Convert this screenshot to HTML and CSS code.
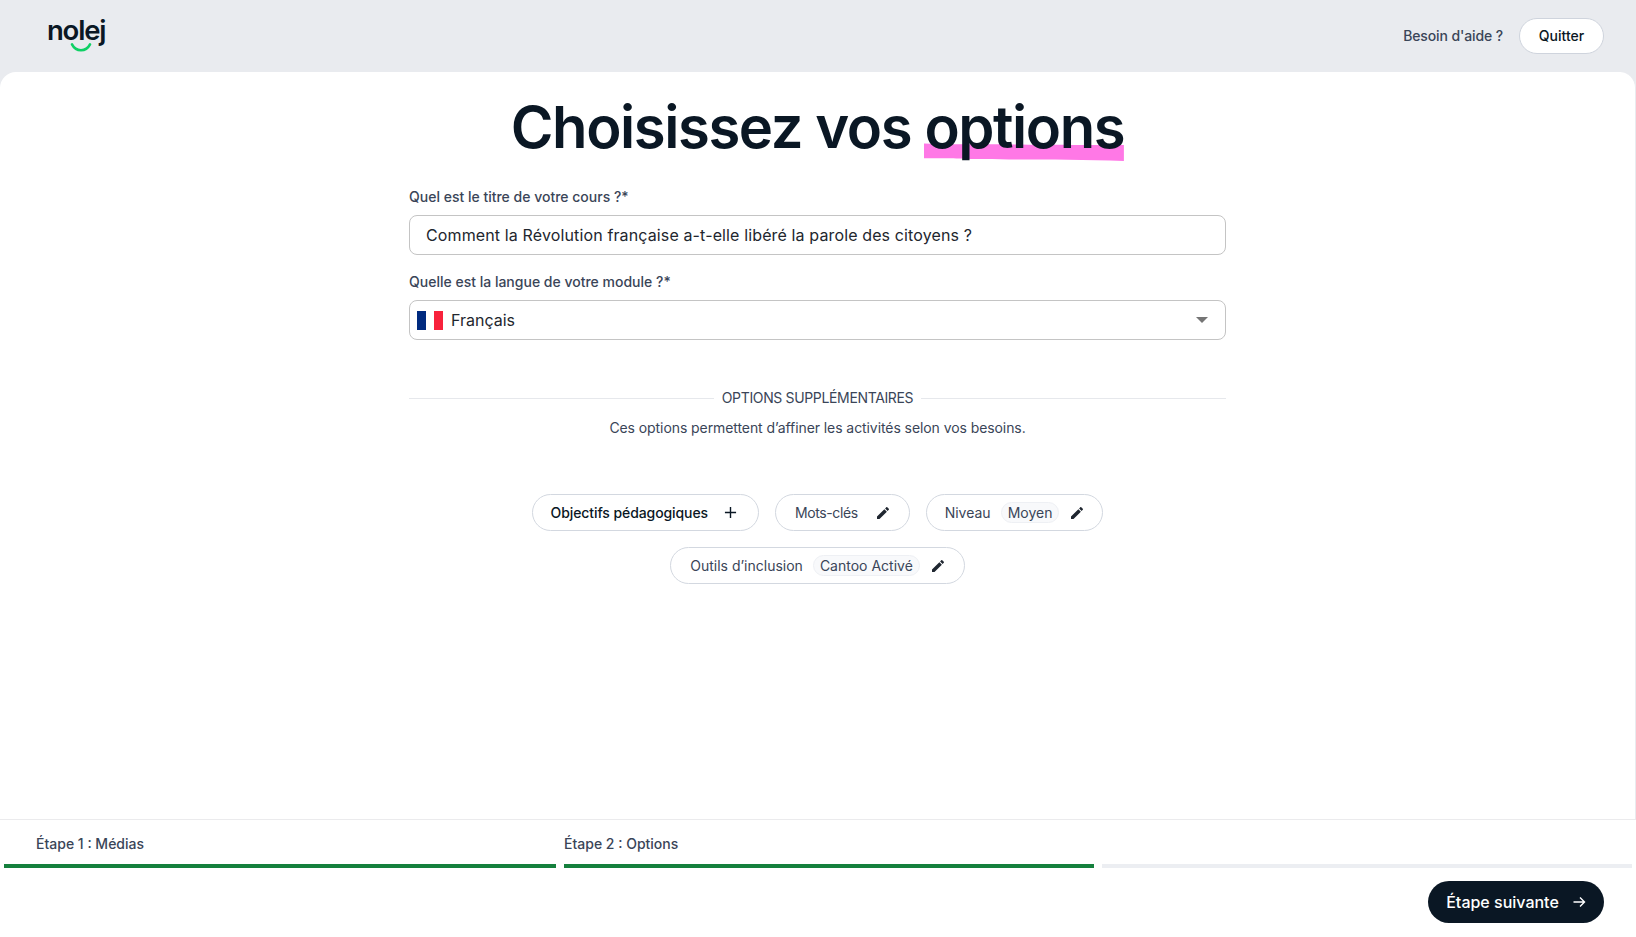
FILE: index.html
```html
<!DOCTYPE html>
<html lang="fr">
<head>
<meta charset="utf-8">
<title>Choisissez vos options</title>
<link rel="stylesheet" href="styles.css">
</head>
<body>
<header class="topbar">
  <a class="logo" href="#"><span class="logo-word">nolej</span>
    <svg class="logo-smile" viewBox="0 0 24 10" aria-hidden="true"><path d="M2 1.500c2.500 5 6 6.500 10 6.500s7.500-1.500 10-6.500" fill="none" stroke="#0fd065" stroke-width="2.800" stroke-linecap="round"/></svg>
  </a>
  <nav class="topnav">
    <a class="help" href="#">Besoin d'aide ?</a>
    <button class="quit" type="button">Quitter</button>
  </nav>
</header>
<main class="card">
  <h1 class="title">Choisissez vos <span class="mark">options<svg class="mark-bg" viewBox="0 0 200 19" preserveAspectRatio="none" aria-hidden="true"><path d="M0 0.500 C40 2 60 1 90 1.500 S170 2 200 2 L200 19 C150 17 100 18 60 17 S20 16 0 16 Z" fill="#ff78e6"/></svg></span></h1>
  <section class="form">
    <label class="field-label" for="course-title">Quel est le titre de votre cours ?*</label>
    <input class="field" id="course-title" type="text" value="Comment la Révolution française a-t-elle libéré la parole des citoyens ?">
    <div class="field-label second">Quelle est la langue de votre module ?*</div>
    <div class="field select" role="combobox" aria-expanded="false">
      <span class="flag"><i class="blue"></i><i class="white"></i><i class="red"></i></span>
      <span class="select-value">Français</span>
      <span class="caret"></span>
    </div>
    <div class="divider"><span>OPTIONS SUPPLÉMENTAIRES</span></div>
    <p class="hint">Ces options permettent d’affiner les activités selon vos besoins.</p>
    <div class="chips">
      <button class="chip strong" type="button"><span class="chip-label">Objectifs pédagogiques</span>
        <svg class="icon plus" viewBox="0 0 14 14" aria-hidden="true"><path d="M7 1v12M1 7h12" fill="none" stroke="currentColor" stroke-width="1.500"/></svg></button>
      <button class="chip keywords" type="button"><span class="chip-label">Mots-clés</span>
        <svg class="icon" viewBox="0 0 24 24" aria-hidden="true"><path d="M3 17.250V21h3.750L17.810 9.940l-3.750-3.750L3 17.250zM20.710 7.040c.39-.39.39-1.020 0-1.410l-2.340-2.340c-.39-.39-1.020-.39-1.410 0l-1.830 1.830 3.750 3.750 1.830-1.830z" fill="currentColor"/></svg></button>
      <button class="chip level" type="button"><span class="chip-label">Niveau</span><span class="pill">Moyen</span>
        <svg class="icon" viewBox="0 0 24 24" aria-hidden="true"><path d="M3 17.250V21h3.750L17.810 9.940l-3.750-3.750L3 17.250zM20.710 7.040c.39-.39.39-1.020 0-1.410l-2.340-2.340c-.39-.39-1.020-.39-1.410 0l-1.830 1.830 3.750 3.750 1.830-1.830z" fill="currentColor"/></svg></button>
      <button class="chip" type="button"><span class="chip-label">Outils d’inclusion</span><span class="pill">Cantoo Activé</span>
        <svg class="icon" viewBox="0 0 24 24" aria-hidden="true"><path d="M3 17.250V21h3.750L17.810 9.940l-3.750-3.750L3 17.250zM20.710 7.040c.39-.39.39-1.020 0-1.410l-2.340-2.340c-.39-.39-1.020-.39-1.410 0l-1.830 1.830 3.750 3.750 1.830-1.830z" fill="currentColor"/></svg></button>
    </div>
  </section>
</main>
<footer class="footer">
  <ol class="steps">
    <li class="step done step-1"><span class="step-name">Étape 1 : Médias</span></li>
    <li class="step done step-2"><span class="step-name">Étape 2 : Options</span></li>
    <li class="step step-3"><span class="step-name"></span></li>
  </ol>
  <div class="actions">
    <button class="next" type="button">Étape suivante
      <svg class="arrow" viewBox="0 0 14 14" aria-hidden="true"><path d="M1.500 7h11M8 2.500 12.500 7 8 11.500" fill="none" stroke="currentColor" stroke-width="1.400"/></svg></button>
  </div>
</footer>
</body>
</html>
```
FILE: styles.css
```css
* { box-sizing: border-box; }
html, body { height: 100%; }
body {
  margin: 0;
  height: 937px;
  overflow: hidden;
  display: flex;
  flex-direction: column;
  background: #e9ebef;
  font-family: "Inter", "Liberation Sans", sans-serif;
  color: #3a4558;
}
a { text-decoration: none; color: inherit; }
button { font-family: inherit; cursor: pointer; }

.topbar {
  height: 72px;
  flex: none;
  display: flex;
  align-items: center;
  justify-content: space-between;
  padding: 0 32px 0 47px;
}
.logo {
  display: flex;
  flex-direction: column;
  align-items: flex-start;
  height: 36px;
  position: relative;
  margin-top: -12px;
}
.logo-word {
  font-size: 27.5px;
  line-height: 36px;
  font-weight: 600;
  letter-spacing: -1.2px;
  color: #0a1724;
}
.logo-smile {
  position: absolute;
  left: 23px;
  top: 31px;
  width: 22px;
  height: 9px;
}
.topnav { display: flex; align-items: center; gap: 16px; margin-top: -1px; }
.help { font-size: 14px; font-weight: 500; color: #3a4558; letter-spacing: -0.12px; }
.quit {
  height: 36px;
  width: 85px;
  border: 1px solid #cfd4dd;
  border-radius: 18px;
  background: #fff;
  font-size: 14px;
  font-weight: 500;
  color: #0a1724;
}

.card {
  flex: 1;
  min-height: 0;
  background: #fff;
  border-radius: 16px 16px 0 0;
  border-right: 1px solid #e9ebef;
  padding-top: 19px;
}
.title {
  margin: 0;
  text-align: center;
  font-size: 58px;
  line-height: 72px;
  font-weight: 600;
  color: #0a1724;
  letter-spacing: -1.42px;
}
.mark { position: relative; display: inline-block; z-index: 0; }
.mark-bg {
  position: absolute;
  left: 0;
  right: 0;
  top: 52px;
  width: 100%;
  height: 18px;
  z-index: -1;
}
.form { width: 817px; margin: 24px auto 0 auto; }
.field-label {
  display: block;
  font-size: 14px;
  line-height: 20px;
  font-weight: 500;
  color: #3a4558;
  margin-bottom: 8px;
}
.field-label.second { margin-top: 17px; }
.field {
  display: flex;
  align-items: center;
  width: 100%;
  height: 40px;
  border: 1px solid #c4c4c4;
  border-radius: 8px;
  background: #fff;
  padding: 0 16px;
  font-family: inherit;
  font-size: 16px;
  letter-spacing: 0.13px;
  color: #22262e;
  outline: none;
}
.select { padding: 0 15px 0 7px; gap: 8px; letter-spacing: 0; }
.flag { display: flex; width: 26px; height: 19px; flex: none; }
.flag i { flex: 1; display: block; }
.flag .blue { background: #002a7f; }
.flag .white { background: #fff; }
.flag .red { background: #f8223c; }
.select-value { flex: 1; }
.caret {
  width: 0;
  height: 0;
  border-left: 6px solid transparent;
  border-right: 6px solid transparent;
  border-top: 6px solid #757575;
  margin-right: 2px;
}
.divider {
  display: flex;
  align-items: center;
  gap: 8px;
  margin-top: 47px;
  font-size: 14px;
  line-height: 22px;
  letter-spacing: -0.35px;
  color: #3a4558;
}
.divider::before, .divider::after {
  content: "";
  flex: 1;
  height: 1px;
  background: #e6e8ec;
}
.hint {
  margin: 9px 0 0;
  text-align: center;
  font-size: 14px;
  line-height: 20px;
  letter-spacing: -0.08px;
  color: #3a4558;
}
.chips {
  display: flex;
  flex-wrap: wrap;
  justify-content: center;
  gap: 16px;
  margin-top: 56px;
}
.chip {
  height: 37px;
  display: flex;
  align-items: center;
  gap: 10px;
  padding: 0 18px 0 19px;
  border: 1px solid #d3d8e0;
  border-radius: 19px;
  background: #fff;
  font-size: 14px;
  color: #3a4558;
}
.chip.strong { color: #0a1724; font-weight: 500; padding: 0 21px 0 18px; letter-spacing: -0.09px; }
.chip.level { padding: 0 17px 0 18px; }
.pill {
  height: 21px;
  display: flex;
  align-items: center;
  padding: 0 6px;
  border: 1px solid #eef0f4;
  border-radius: 11px;
  background: #f8f9fb;
}
.icon { width: 16px; height: 16px; color: #1f2630; flex: none; }
.icon.plus { width: 13px; height: 13px; margin-left: 6px; color: #0a1724; }
.keywords { letter-spacing: -0.4px; }
.keywords .icon { margin-left: 7px; }

.footer {
  height: 118px;
  flex: none;
  background: #fff;
  border-top: 1px solid #ebebed;
}
.steps {
  list-style: none;
  margin: 0;
  padding: 0 4px;
  display: flex;
  gap: 8px;
}
.step {
  height: 48px;
  border-bottom: 4px solid #eceef2;
  display: flex;
  align-items: center;
  font-size: 14px;
  font-weight: 500;
  color: #3a4558;
  padding-top: 2px;
}
.step.done { border-bottom-color: #15803d; }
.step-1 { flex: 0 0 552px; padding-left: 32px; }
.step-2 { flex: 0 0 530px; }
.step-3 { flex: 1; }
.actions { display: flex; justify-content: flex-end; padding: 13px 32px 0 0; }
.next {
  height: 42px;
  width: 176px;
  border: 0;
  border-radius: 21px;
  background: #0a1724;
  color: #fff;
  font-size: 16px;
  font-weight: 500;
  display: flex;
  align-items: center;
  justify-content: center;
  gap: 13px;
}
.arrow { width: 14px; height: 14px; }
```
